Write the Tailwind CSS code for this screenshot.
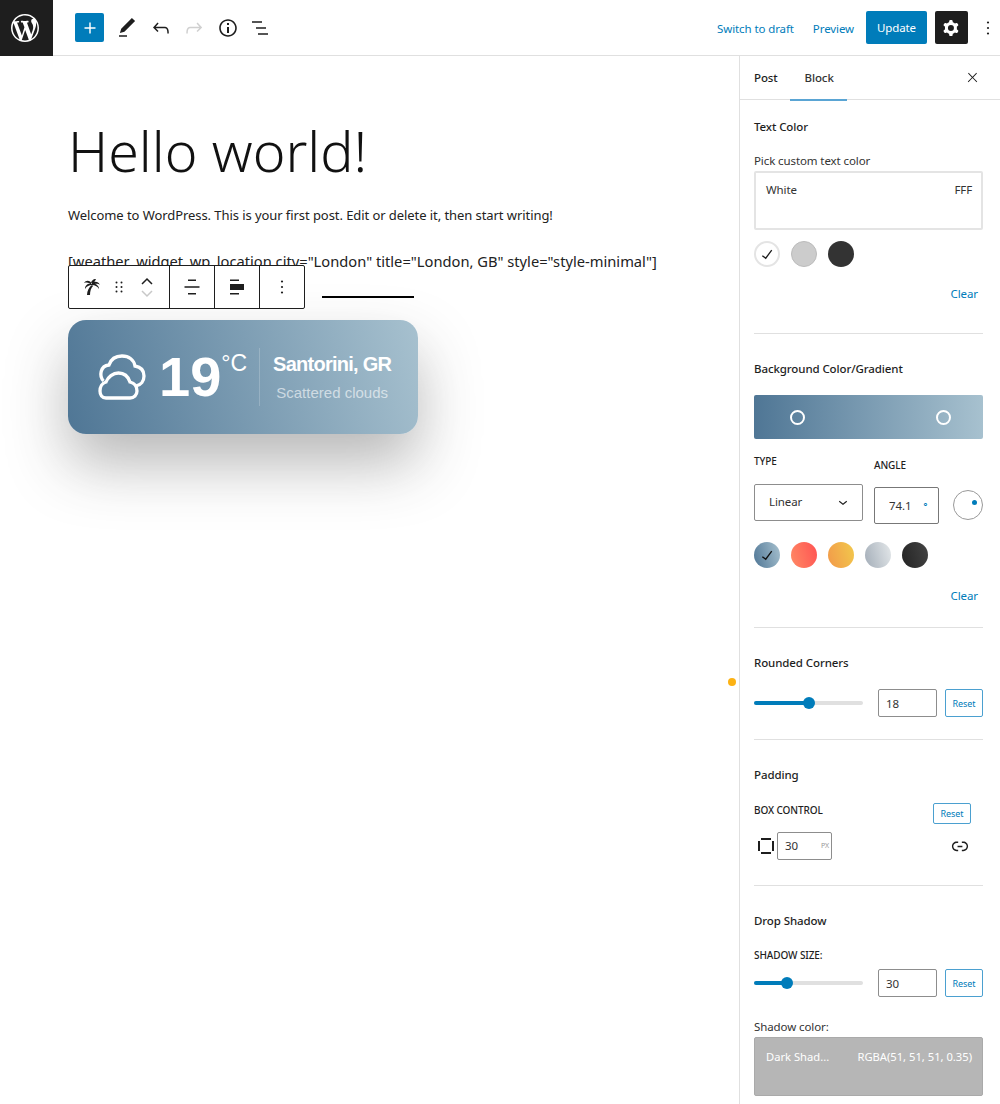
<!DOCTYPE html>
<html lang="en">
<head>
    <meta charset="utf-8" />
    <title>Edit Post</title>
    <script src="https://cdn.jsdelivr.net/npm/@tailwindcss/browser@4"></script>
</head>
<body class="bg-white font-['Noto_Sans','Open_Sans',sans-serif] text-[#1e1e1e] overflow-hidden">
<div class="relative w-[1000px] h-[1104px] overflow-hidden">
    <!-- Top bar -->
    <header class="flex items-center h-[56px] border-b border-[#e0e0e0]">
        <div class="flex items-center w-[53px] h-[56px] bg-[#1e1e1e] pl-[11px]">
            <svg class="w-[28px] h-[28px] fill-white" viewBox="0 0 20 20"><path d="M20 10c0-5.51-4.49-10-10-10C4.48 0 0 4.49 0 10c0 5.52 4.48 10 10 10 5.51 0 10-4.48 10-10zM7.78 15.37L4.37 6.22c.55-.02 1.17-.08 1.17-.08.5-.06.44-1.13-.06-1.11 0 0-1.45.11-2.37.11-.18 0-.37 0-.58-.01C4.12 2.69 6.87 1.11 10 1.11c2.33 0 4.45.87 6.05 2.34-.68-.11-1.65.39-1.65 1.58 0 .74.45 1.36.9 2.1.35.61.55 1.36.55 2.46 0 1.49-1.4 5-1.4 5l-3.03-8.37c.54-.02.82-.17.82-.17.5-.05.44-1.25-.06-1.22 0 0-1.44.12-2.38.12-.87 0-2.33-.12-2.33-.12-.5-.03-.56 1.2-.06 1.22l.92.08 1.26 3.41zM17.41 10c.24-.64.74-1.87.43-4.25.7 1.29 1.05 2.71 1.05 4.25 0 3.29-1.73 6.24-4.4 7.78.97-2.59 1.94-5.2 2.92-7.78zM6.1 18.09C3.12 16.65 1.11 13.53 1.11 10c0-1.3.23-2.48.72-3.59C3.25 10.3 4.67 14.2 6.1 18.09zm4.03-6.63l2.58 6.98c-.86.29-1.76.45-2.71.45-.79 0-1.57-.11-2.29-.33.81-2.38 1.62-4.74 2.42-7.1z"/></svg>
        </div>
        <div class="flex items-center ml-[22px]">
            <div class="flex items-center justify-center w-[29px] h-[29px] rounded-[2px] bg-[#007cba]">
                <svg class="w-[22px] h-[22px] fill-white" viewBox="0 0 24 24"><path d="M18 11.2h-5.2V6h-1.6v5.2H6v1.6h5.2V18h1.6v-5.2H18z"/></svg>
            </div>
            <div class="flex items-center gap-[9.5px] ml-[11px]">
                <svg class="w-[24px] h-[24px] fill-[#1e1e1e]" viewBox="0 0 24 24"><path d="M20.1 5.1L16.9 2 6.2 12.7l-1.3 4.4 4.5-1.3L20.1 5.1zM4 20.8h8v-1.5H4v1.5z"/></svg>
                <svg class="w-[24px] h-[24px] fill-[#1e1e1e]" viewBox="0 0 24 24"><path d="M18.3 11.7c-.6-.6-1.4-.9-2.3-.9H6.7l2.9-3.3-1.1-1-4.5 5L8.5 16l1-1-2.7-2.7H16c.5 0 .9.2 1.3.5 1 1 1 3.4 1 4.5v.3h1.5v-.2c0-1.5 0-4.3-1.5-5.7z"/></svg>
                <svg class="w-[24px] h-[24px] fill-[#d0d0d0]" viewBox="0 0 24 24"><path d="M15.6 6.5l-1.1 1 2.9 3.3H8c-.9 0-1.7.3-2.3.9-1.4 1.5-1.4 4.2-1.4 5.6v.2h1.5v-.3c0-1.1 0-3.5 1-4.5.3-.3.7-.5 1.3-.5h9.2L14.5 15l1.1 1.1 4.6-4.6-4.6-5z"/></svg>
                <svg class="w-[24px] h-[24px] fill-[#1e1e1e]" viewBox="0 0 24 24"><path d="M12 3.2c-4.8 0-8.8 3.9-8.8 8.8 0 4.8 3.9 8.8 8.8 8.8 4.8 0 8.8-3.9 8.8-8.8 0-4.8-4-8.8-8.8-8.8zm0 16c-4 0-7.2-3.3-7.2-7.2C4.8 8 8 4.8 12 4.8s7.2 3.3 7.2 7.2c0 4-3.2 7.2-7.2 7.2zM11 17h2v-6h-2v6zm0-8h2V7h-2v2z"/></svg>
                <svg class="w-[24px] h-[24px] fill-[#1e1e1e]" viewBox="0 0 24 24"><path d="M3 5.2h10v1.5H3zM7 11.2h10v1.5H7zM9 17.2h10v1.5H9z"/></svg>
            </div>
        </div>
        <div class="flex items-center ml-auto h-full text-[11.5px] tracking-[-0.1px]">
            <span class="mt-[2px] text-[#007cba]">Switch to draft</span>
            <span class="mt-[2px] text-[#007cba] ml-[19px]">Preview</span>
            <div class="flex items-center justify-center w-[61px] h-[33px] ml-[12px] pt-[1px] rounded-[2px] bg-[#007cba] text-white">Update</div>
            <div class="flex items-center justify-center w-[33px] h-[33px] ml-[8px] pr-[1px] rounded-[2px] bg-[#1e1e1e]">
                <svg class="w-[24px] h-[24px] fill-white" viewBox="0 0 24 24"><path fill-rule="evenodd" d="M10.289 4.836A1 1 0 0111.275 4h1.306a1 1 0 01.987.836l.244 1.466c.787.26 1.503.679 2.108 1.218l1.393-.522a1 1 0 011.216.437l.653 1.13a1 1 0 01-.23 1.273l-1.148.944a6.025 6.025 0 010 2.435l1.149.946a1 1 0 01.23 1.272l-.653 1.13a1 1 0 01-1.216.437l-1.394-.522c-.605.54-1.32.958-2.108 1.218l-.244 1.466a1 1 0 01-.987.836h-1.306a1 1 0 01-.986-.836l-.244-1.466a5.995 5.995 0 01-2.108-1.218l-1.394.522a1 1 0 01-1.217-.436l-.653-1.131a1 1 0 01.23-1.272l1.149-.946a6.026 6.026 0 010-2.435l-1.148-.944a1 1 0 01-.23-1.272l.653-1.131a1 1 0 011.217-.437l1.393.522a5.994 5.994 0 012.108-1.218l.244-1.466zM14.929 12a3 3 0 11-6 0 3 3 0 016 0z"/></svg>
            </div>
            <svg class="w-[24px] h-[24px] ml-[8px] fill-[#1e1e1e]" viewBox="0 0 24 24"><circle cx="12" cy="6.5" r="1.1"/><circle cx="12" cy="12" r="1.1"/><circle cx="12" cy="17.5" r="1.1"/></svg>
        </div>
    </header>

    <div class="flex">
        <!-- Editor canvas -->
        <main class="relative w-[739px] h-[1048px] pl-[68px]">
            <h1 class="mt-[55px] text-[55.5px] leading-[80px] font-light text-[#111]">Hello world!</h1>
            <p class="mt-[14px] text-[13px] leading-[20px] tracking-[-0.07px] text-[#222]">Welcome to WordPress. This is your first post. Edit or delete it, then start writing!</p>
            <p class="mt-[25px] text-[14.7px] leading-[22px] text-[#222] whitespace-nowrap">[weather_widget_wp_location city="London" title="London, GB" style="style-minimal"]</p>

            <div class="flex items-center w-[350px] h-[114px] mt-[48px] rounded-[18px] bg-[linear-gradient(74.1deg,#4f7695,#a7c1cf)] shadow-[0_30px_60px_rgba(51,51,51,0.35)] pl-[30px] font-['Liberation_Sans',sans-serif] text-white">
                <svg class="w-[48px] h-[46px] fill-none stroke-white stroke-[3.3]" viewBox="0 0 48 46">
                    <path d="M5.500 27C1 22 2 12 11 11C13 5 18 2 24 2C31 2 36 6 37 12C43 13 46 17 46 22C46 27 43 31 38 32"/>
                    <path d="M8 44H32C36 44 39 41 39 37C39 32 36 29 32 28C30 22 26 19 20.500 19C15 19 10 23 8 28C4 29 2 33 2 37C2 41 4 44 8 44Z"/>
                </svg>
                <span class="ml-[13px] text-[56px] leading-none font-bold">19</span>
                <span class="self-start mt-[28px] ml-[0px] text-[23px] leading-[30px]">°C</span>
                <div class="w-px h-[58px] ml-[12px] bg-white/20"></div>
                <div class="flex flex-col items-center ml-[13px]">
                    <span class="text-[20px] leading-[24px] font-bold tracking-[-0.75px]">Santorini, GR</span>
                    <span class="mt-[7px] text-[15px] leading-[20px] text-white/60">Scattered clouds</span>
                </div>
            </div>

            <!-- Block toolbar sits over the shortcode line -->
            <div class="absolute left-[68px] top-[209px] flex items-stretch w-[237px] h-[44px] bg-white border border-[#1e1e1e] rounded-[2px]">
                <div class="flex items-center w-[101px] border-r border-[#1e1e1e] pl-[12px]">
                    <svg class="w-[20px] h-[20px] fill-[#1e1e1e]" viewBox="0 0 20 20"><path d="M11 8C8 10 6 14 6 18H9C9 14 10 11 12 9ZM11 7C9 3 5 3 3 6C6 5 9 6 11 8ZM11 7C7 6 4 8 4 12C6 9 8 8 11 8ZM10 7C10 4 12 2 15 2C14 4 13 6 11 8ZM11 7C13 4 17 4 19 8C16 6 14 7 12 8ZM11 7C14 6 18 8 18 12C16 9 14 8 11 8Z"/></svg>
                    <svg class="w-[18px] h-[18px] ml-[9px] fill-[#1e1e1e]" viewBox="0 0 18 18"><circle cx="6.500" cy="4.500" r="1"/><circle cx="11.500" cy="4.500" r="1"/><circle cx="6.500" cy="9" r="1"/><circle cx="11.500" cy="9" r="1"/><circle cx="6.500" cy="13.500" r="1"/><circle cx="11.500" cy="13.500" r="1"/></svg>
                    <div class="flex flex-col items-center ml-[12px] gap-[3px]">
                        <svg class="w-[14px] h-[9px] fill-none stroke-[#1e1e1e] stroke-[1.5]" viewBox="0 0 14 9"><path d="M2 7l5-5 5 5"/></svg>
                        <svg class="w-[14px] h-[9px] fill-none stroke-[#c8c8c8] stroke-[1.5]" viewBox="0 0 14 9"><path d="M2 2l5 5 5-5"/></svg>
                    </div>
                </div>
                <div class="flex items-center justify-center w-[45px] border-r border-[#1e1e1e]">
                    <svg class="w-[24px] h-[24px] fill-[#1e1e1e]" viewBox="0 0 24 24"><path d="M8 4.500h8V6H8zM4.500 11.200h15v1.500h-15zM8 18h8v1.500H8z"/></svg>
                </div>
                <div class="flex items-center justify-center w-[45px] border-r border-[#1e1e1e]">
                    <svg class="w-[24px] h-[24px] fill-[#1e1e1e]" viewBox="0 0 24 24"><path d="M5 4.500h9V6H5zM5 9h14v6H5zM5 18h9v1.500H5z"/></svg>
                </div>
                <div class="flex flex-1 items-center justify-center">
                    <svg class="w-[24px] h-[24px] fill-[#1e1e1e]" viewBox="0 0 24 24"><circle cx="12" cy="6.500" r="1.100"/><circle cx="12" cy="12" r="1.100"/><circle cx="12" cy="17.500" r="1.100"/></svg>
                </div>
            </div>
            <div class="absolute left-[322px] top-[240px] w-[92px] h-[2px] bg-black"></div>
            <div class="absolute left-[728px] top-[622px] w-[8px] h-[8px] rounded-full bg-[#fcb214]"></div>
        </main>

        <!-- Settings sidebar -->
        <aside class="w-[261px] h-[1048px] border-l border-[#e0e0e0] text-[11.5px] tracking-[-0.1px]">
            <div class="flex items-center h-[44px] border-b border-[#e0e0e0] pt-[1px]">
                <span class="ml-[14px] font-medium">Post</span>
                <div class="relative flex items-center justify-center w-[57px] h-[43px] ml-[12px] pl-[2px]">
                    <span class="font-medium text-[#333]">Block</span>
                    <div class="absolute left-0 right-0 bottom-[-1px] h-[2px] bg-[#5aa5d4]"></div>
                </div>
                <svg class="w-[15px] h-[15px] ml-auto mr-[20px] mt-[-2px] fill-[#1e1e1e]" viewBox="0 0 24 24"><path d="M13 11.800l6.100-6.300-1-1-6.100 6.200-6.100-6.200-1 1 6.100 6.300-6.500 6.700 1 1 6.500-6.600 6.500 6.600 1-1z"/></svg>
            </div>

            <div class="pl-[14px] pr-[17px]">
                <!-- Text colour -->
                <h2 class="mt-[19px] leading-[16px] font-medium">Text Color</h2>
                <p class="mt-[18px] leading-[16px] text-[#333]">Pick custom text color</p>
                <div class="flex justify-between h-[59px] mt-[2px] border-2 border-[#e4e4e4] rounded-[2px] pl-[10px] pr-[9px] pt-[9px] leading-[16px] text-[#333]">
                    <span>White</span><span>FFF</span>
                </div>
                <div class="flex gap-[11px] mt-[11px]">
                    <div class="flex items-center justify-center w-[26px] h-[26px] rounded-full bg-white border-2 border-[#e4e4e4]">
                        <svg class="w-[16px] h-[16px] fill-[#1e1e1e]" viewBox="0 0 24 24"><path d="M18.300 5.600L9.900 16.900 5.600 13.700l-1.200 1.600 5.900 4.400 9.600-13z"/></svg>
                    </div>
                    <div class="w-[26px] h-[26px] rounded-full bg-[#cccccc] border border-[#bbb]"></div>
                    <div class="w-[26px] h-[26px] rounded-full bg-[#333333]"></div>
                </div>
                <div class="mt-[19px] mr-[5px] text-right leading-[16px] text-[#007cba]">Clear</div>
                <div class="mt-[31px] h-px bg-[#e0e0e0]"></div>

                <!-- Background -->
                <h2 class="mt-[27px] leading-[16px] font-medium">Background Color/Gradient</h2>
                <div class="flex items-center h-[44px] mt-[18px] rounded-[2px] bg-[linear-gradient(90deg,#4f7695,#a7c1cf)] pl-[36px]">
                    <div class="w-[15px] h-[15px] rounded-full border-2 border-white"></div>
                    <div class="w-[15px] h-[15px] ml-[131px] rounded-full border-2 border-white"></div>
                </div>
                <div class="flex mt-[14px]">
                    <div class="w-[120px]">
                        <p class="text-[10px] leading-[16px] font-medium uppercase">Type</p>
                        <div class="flex items-center justify-between w-[109px] h-[37px] mt-[15px] pb-[2px] border border-[#8d8d8d] rounded-[2px] px-[14px] text-[#333]">
                            <span>Linear</span>
                            <svg class="w-[18px] h-[18px] mr-[-4px] fill-[#1e1e1e]" viewBox="0 0 24 24"><path d="M17.500 11.600L12 16l-5.500-4.400.9-1.200L12 14l4.500-3.600 1 1.200z"/></svg>
                        </div>
                    </div>
                    <div class="w-[79px] pt-[4px]">
                        <p class="text-[10px] leading-[16px] font-medium uppercase">Angle</p>
                        <div class="flex items-center w-[65px] h-[37px] mt-[14px] border border-[#777] rounded-[2px] pl-[14px] text-[#333]">
                            <span>74.1</span>
                            <span class="ml-[12px] text-[9px] font-bold text-[#007cba]">°</span>
                        </div>
                    </div>
                    <div class="flex items-center justify-end w-[30px] h-[30px] mt-[37px] rounded-full border-[1.5px] border-[#999] pr-[5px]">
                        <div class="w-[5px] h-[5px] mt-[-6px] rounded-full bg-[#007cba]"></div>
                    </div>
                </div>
                <div class="flex gap-[11px] mt-[18px]">
                    <div class="flex items-center justify-center w-[26px] h-[26px] rounded-full bg-[linear-gradient(74deg,#4f7695,#a7c1cf)]">
                        <svg class="w-[16px] h-[16px] fill-[#111]" viewBox="0 0 24 24"><path d="M18.300 5.600L9.900 16.900 5.600 13.700l-1.200 1.600 5.900 4.400 9.600-13z"/></svg>
                    </div>
                    <div class="w-[26px] h-[26px] rounded-full bg-[linear-gradient(74deg,#ff8a65,#ff5252)]"></div>
                    <div class="w-[26px] h-[26px] rounded-full bg-[linear-gradient(74deg,#f2994a,#f2c94c)]"></div>
                    <div class="w-[26px] h-[26px] rounded-full bg-[linear-gradient(74deg,#a3adb8,#e4e8ea)]"></div>
                    <div class="w-[26px] h-[26px] rounded-full bg-[linear-gradient(74deg,#232323,#444444)]"></div>
                </div>
                <div class="mt-[20px] mr-[5px] text-right leading-[16px] text-[#007cba]">Clear</div>
                <div class="mt-[23px] h-px bg-[#e0e0e0]"></div>

                <!-- Rounded corners -->
                <h2 class="mt-[27px] leading-[16px] font-medium">Rounded Corners</h2>
                <div class="flex items-center h-[28px] mt-[18px]">
                    <div class="relative w-[109px] h-[4px] rounded-full bg-[#e0e0e0]">
                        <div class="w-[55px] h-full rounded-full bg-[#007cba]"></div>
                        <div class="absolute left-[49px] top-[-4px] w-[12px] h-[12px] rounded-full bg-[#007cba]"></div>
                    </div>
                    <div class="flex items-center w-[59px] h-[28px] ml-[15px] border border-[#8d8d8d] rounded-[2px] pl-[7px] pt-[2px] text-[#333]">18</div>
                    <div class="flex items-center justify-center w-[38px] h-[28px] ml-[8px] pt-[1px] border border-[#4ba0d0] rounded-[2px] text-[9px] text-[#007cba]">Reset</div>
                </div>
                <div class="mt-[22px] h-px bg-[#e0e0e0]"></div>

                <!-- Padding -->
                <h2 class="mt-[27px] leading-[16px] font-medium">Padding</h2>
                <div class="flex items-start justify-between h-[21px] mt-[20px] pr-[12px]">
                    <span class="text-[10px] leading-[14px] font-medium uppercase">Box Control</span>
                    <div class="flex items-center justify-center w-[38px] h-[21px] border border-[#4ba0d0] rounded-[2px] text-[9px] text-[#007cba]">Reset</div>
                </div>
                <div class="flex items-center h-[28px] mt-[8px]">
                    <svg class="w-[16px] h-[16px] ml-[4px] fill-[#1e1e1e]" viewBox="0 0 16 16"><path d="M3 0h10v2H3zM3 14h10v2H3zM0 3h2v10H0zM14 3h2v10h-2z"/></svg>
                    <div class="flex items-center justify-between w-[55px] h-[28px] ml-[3px] border border-[#8d8d8d] rounded-[2px] pl-[7px] pr-[2px] text-[#333]">
                        <span>30</span><span class="text-[7px] text-[#999]">PX</span>
                    </div>
                    <svg class="w-[22px] h-[22px] ml-[117px] fill-[#1e1e1e]" viewBox="0 0 24 24"><path d="M15.600 7.200H14v1.500h1.600c2 0 3.700 1.700 3.700 3.700s-1.700 3.700-3.700 3.700H14v1.500h1.600c2.800 0 5.200-2.300 5.200-5.200 0-2.900-2.300-5.200-5.200-5.200zM4.700 12.400c0-2 1.700-3.700 3.700-3.700H10V7.200H8.400c-2.900 0-5.200 2.300-5.200 5.200 0 2.900 2.300 5.200 5.200 5.200H10v-1.500H8.400c-2 0-3.700-1.700-3.700-3.700zm4.600.9h5.300v-1.500H9.300v1.500z"/></svg>
                </div>
                <div class="mt-[25px] h-px bg-[#e0e0e0]"></div>

                <!-- Drop shadow -->
                <h2 class="mt-[27px] leading-[16px] font-medium">Drop Shadow</h2>
                <p class="mt-[18px] text-[10px] leading-[16px] font-medium uppercase">Shadow size:</p>
                <div class="flex items-center h-[28px] mt-[6px]">
                    <div class="relative w-[109px] h-[4px] rounded-full bg-[#e0e0e0]">
                        <div class="w-[33px] h-full rounded-full bg-[#007cba]"></div>
                        <div class="absolute left-[27px] top-[-4px] w-[12px] h-[12px] rounded-full bg-[#007cba]"></div>
                    </div>
                    <div class="flex items-center w-[59px] h-[28px] ml-[15px] border border-[#8d8d8d] rounded-[2px] pl-[7px] pt-[2px] text-[#333]">30</div>
                    <div class="flex items-center justify-center w-[38px] h-[28px] ml-[8px] pt-[1px] border border-[#4ba0d0] rounded-[2px] text-[9px] text-[#007cba]">Reset</div>
                </div>
                <p class="mt-[22px] leading-[16px] text-[#333]">Shadow color:</p>
                <div class="flex justify-between h-[59px] mt-[2px] border border-[#aaa] rounded-[2px] bg-[#b6b6b6] pl-[11px] pr-[10px] pt-[11px] text-[11.2px] tracking-normal leading-[16px] text-white">
                    <span>Dark Shad...</span><span>RGBA(51, 51, 51, 0.35)</span>
                </div>
            </div>
        </aside>
    </div>
</div>
</body>
</html>
